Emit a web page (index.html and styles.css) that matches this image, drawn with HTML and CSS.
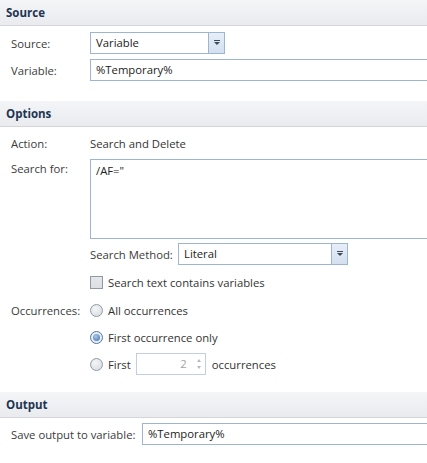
FILE: index.html
```html
<!DOCTYPE html>
<html lang="en">

<head>
    <meta charset="UTF-8">
    <title>Search and Delete</title>
    <link rel="stylesheet" href="styles.css">
</head>

<body>
    <div class="panel">
        <div class="head">Source</div>
        <div class="group group-source">
            <div class="row">
                <span class="label">Source:</span>
                <div class="select select-source">
                    <span class="select-text">Variable</span>
                    <span class="select-btn"><i class="arrow"></i></span>
                </div>
            </div>
            <div class="row">
                <span class="label">Variable:</span>
                <div class="field field-wide">%Temporary%</div>
            </div>
        </div>

        <div class="head">Options</div>
        <div class="group group-options">
            <div class="row row-plain">
                <span class="label">Action:</span>
                <span class="value">Search and Delete</span>
            </div>
            <div class="row row-top">
                <span class="label">Search for:</span>
                <div class="field field-area">/AF="</div>
            </div>
            <div class="row row-method">
                <span class="label"></span>
                <span class="sub-label">Search Method:</span>
                <div class="select select-method">
                    <span class="select-text">Literal</span>
                    <span class="select-btn"><i class="arrow"></i></span>
                </div>
            </div>
            <div class="row row-check">
                <span class="label"></span>
                <span class="check"></span>
                <span class="opt-text">Search text contains variables</span>
            </div>
            <div class="row row-radio">
                <span class="label">Occurrences:</span>
                <span class="radio"></span>
                <span class="opt-text">All occurrences</span>
            </div>
            <div class="row row-radio">
                <span class="label"></span>
                <span class="radio checked"></span>
                <span class="opt-text">First occurrence only</span>
            </div>
            <div class="row row-radio">
                <span class="label"></span>
                <span class="radio"></span>
                <span class="opt-text">First</span>
                <div class="spin">
                    <span class="spin-val">2</span>
                    <span class="spin-btns">
                        <i class="up"></i>
                        <i class="down"></i>
                    </span>
                </div>
                <span class="opt-text">occurrences</span>
            </div>
        </div>

        <div class="head">Output</div>
        <div class="group group-output">
            <div class="row">
                <span class="label label-long">Save output to variable:</span>
                <div class="field field-wide">%Temporary%</div>
            </div>
        </div>
    </div>
</body>

</html>
```
FILE: styles.css
```css
body {
    margin: 0;
    background: #ffffff;
    font-family: "Open Sans", "Noto Sans", sans-serif;
    font-size: 11.3px;
    color: #3b3b3b;
    overflow: hidden;
}

.panel {
    width: 427px;
}

.head {
    height: 25px;
    line-height: 26px;
    padding-left: 6px;
    background: linear-gradient(#f4f5f7, #e9ebef);
    border-bottom: 1px solid #d3d5d9;
    font-weight: bold;
    font-size: 11.5px;
    color: #1d3552;
}

.group-source {
    padding-top: 6px;
    padding-bottom: 15px;
}

.group-options {
    padding-top: 5px;
    padding-bottom: 12px;
}

.group-output {
    padding-top: 5px;
}

.row {
    display: flex;
    align-items: center;
    height: 22px;
    margin-bottom: 5px;
}

.label {
    flex: none;
    width: 79px;
    padding-left: 11px;
}

.label-long {
    width: 131px;
}

.value {
    color: #333333;
}

.row-top {
    align-items: flex-start;
    height: auto;
    margin-bottom: 4px;
}

.row-top .label {
    padding-top: 2px;
}

.field {
    flex: 1;
    box-sizing: border-box;
    height: 22px;
    line-height: 20px;
    padding-left: 5px;
    border: 1px solid #9fb4cf;
    margin-right: -3px;
    color: #222222;
    white-space: nowrap;
}

.field-area {
    height: 80px;
    padding-top: 3px;
    line-height: 16px;
}

.select {
    display: flex;
    box-sizing: border-box;
    height: 22px;
    border: 1px solid #9fb4cf;
    color: #222222;
}

.select-source {
    width: 135px;
}

.select-method {
    width: 170px;
}

.select-text {
    flex: 1;
    line-height: 20px;
    padding-left: 5px;
}

.select-btn {
    flex: none;
    width: 15px;
    border-left: 1px solid #9fb4cf;
    background: linear-gradient(#e6eef8, #d3e0f0);
    display: flex;
    align-items: center;
    justify-content: center;
}

.arrow {
    width: 0;
    height: 0;
    border-left: 3px solid transparent;
    border-right: 3px solid transparent;
    border-top: 3px solid #3d4a5c;
    position: relative;
}

.arrow:before {
    content: "";
    position: absolute;
    left: -3px;
    top: -5px;
    width: 6px;
    height: 1px;
    background: #3d4a5c;
}

.row-method {
    margin-bottom: 8px;
}

.sub-label {
    width: 88px;
    flex: none;
}

.row-check {
    height: 18px;
    margin-bottom: 8px;
}

.check {
    flex: none;
    box-sizing: border-box;
    width: 13px;
    height: 13px;
    border: 1px solid #8f9aa8;
    background: linear-gradient(#e4e6e9, #dcdfe3);
    margin-right: 5px;
}

.radio {
    flex: none;
    box-sizing: border-box;
    width: 13px;
    height: 13px;
    border-radius: 50%;
    border: 1px solid #8f9aa8;
    background: radial-gradient(circle at 40% 35%, #f4f5f6, #d6d9dd);
    margin-right: 5px;
    position: relative;
}

.radio.checked {
    border-color: #4f78a8;
    background: #e9eef4;
}

.radio.checked:after {
    content: "";
    position: absolute;
    left: 2px;
    top: 2px;
    width: 7px;
    height: 7px;
    border-radius: 50%;
    background: radial-gradient(circle at 40% 35%, #a9c7ea, #3f72b0);
}

.opt-text {
    color: #333333;
}

.spin {
    flex: none;
    display: flex;
    box-sizing: border-box;
    width: 70px;
    height: 22px;
    margin: 0 6px 0 5px;
    border: 1px solid #c3cfdf;
}

.spin-val {
    flex: 1;
    text-align: right;
    line-height: 20px;
    padding-right: 6px;
    color: #a3a3a3;
}

.spin-btns {
    flex: none;
    width: 12px;
    display: flex;
    flex-direction: column;
    align-items: center;
    justify-content: center;
    gap: 4px;
}

.spin-btns i {
    width: 0;
    height: 0;
    border-left: 2.5px solid transparent;
    border-right: 2.5px solid transparent;
}

.spin-btns .up {
    border-bottom: 3px solid #b5b9bf;
}

.spin-btns .down {
    border-top: 3px solid #b5b9bf;
}
```
